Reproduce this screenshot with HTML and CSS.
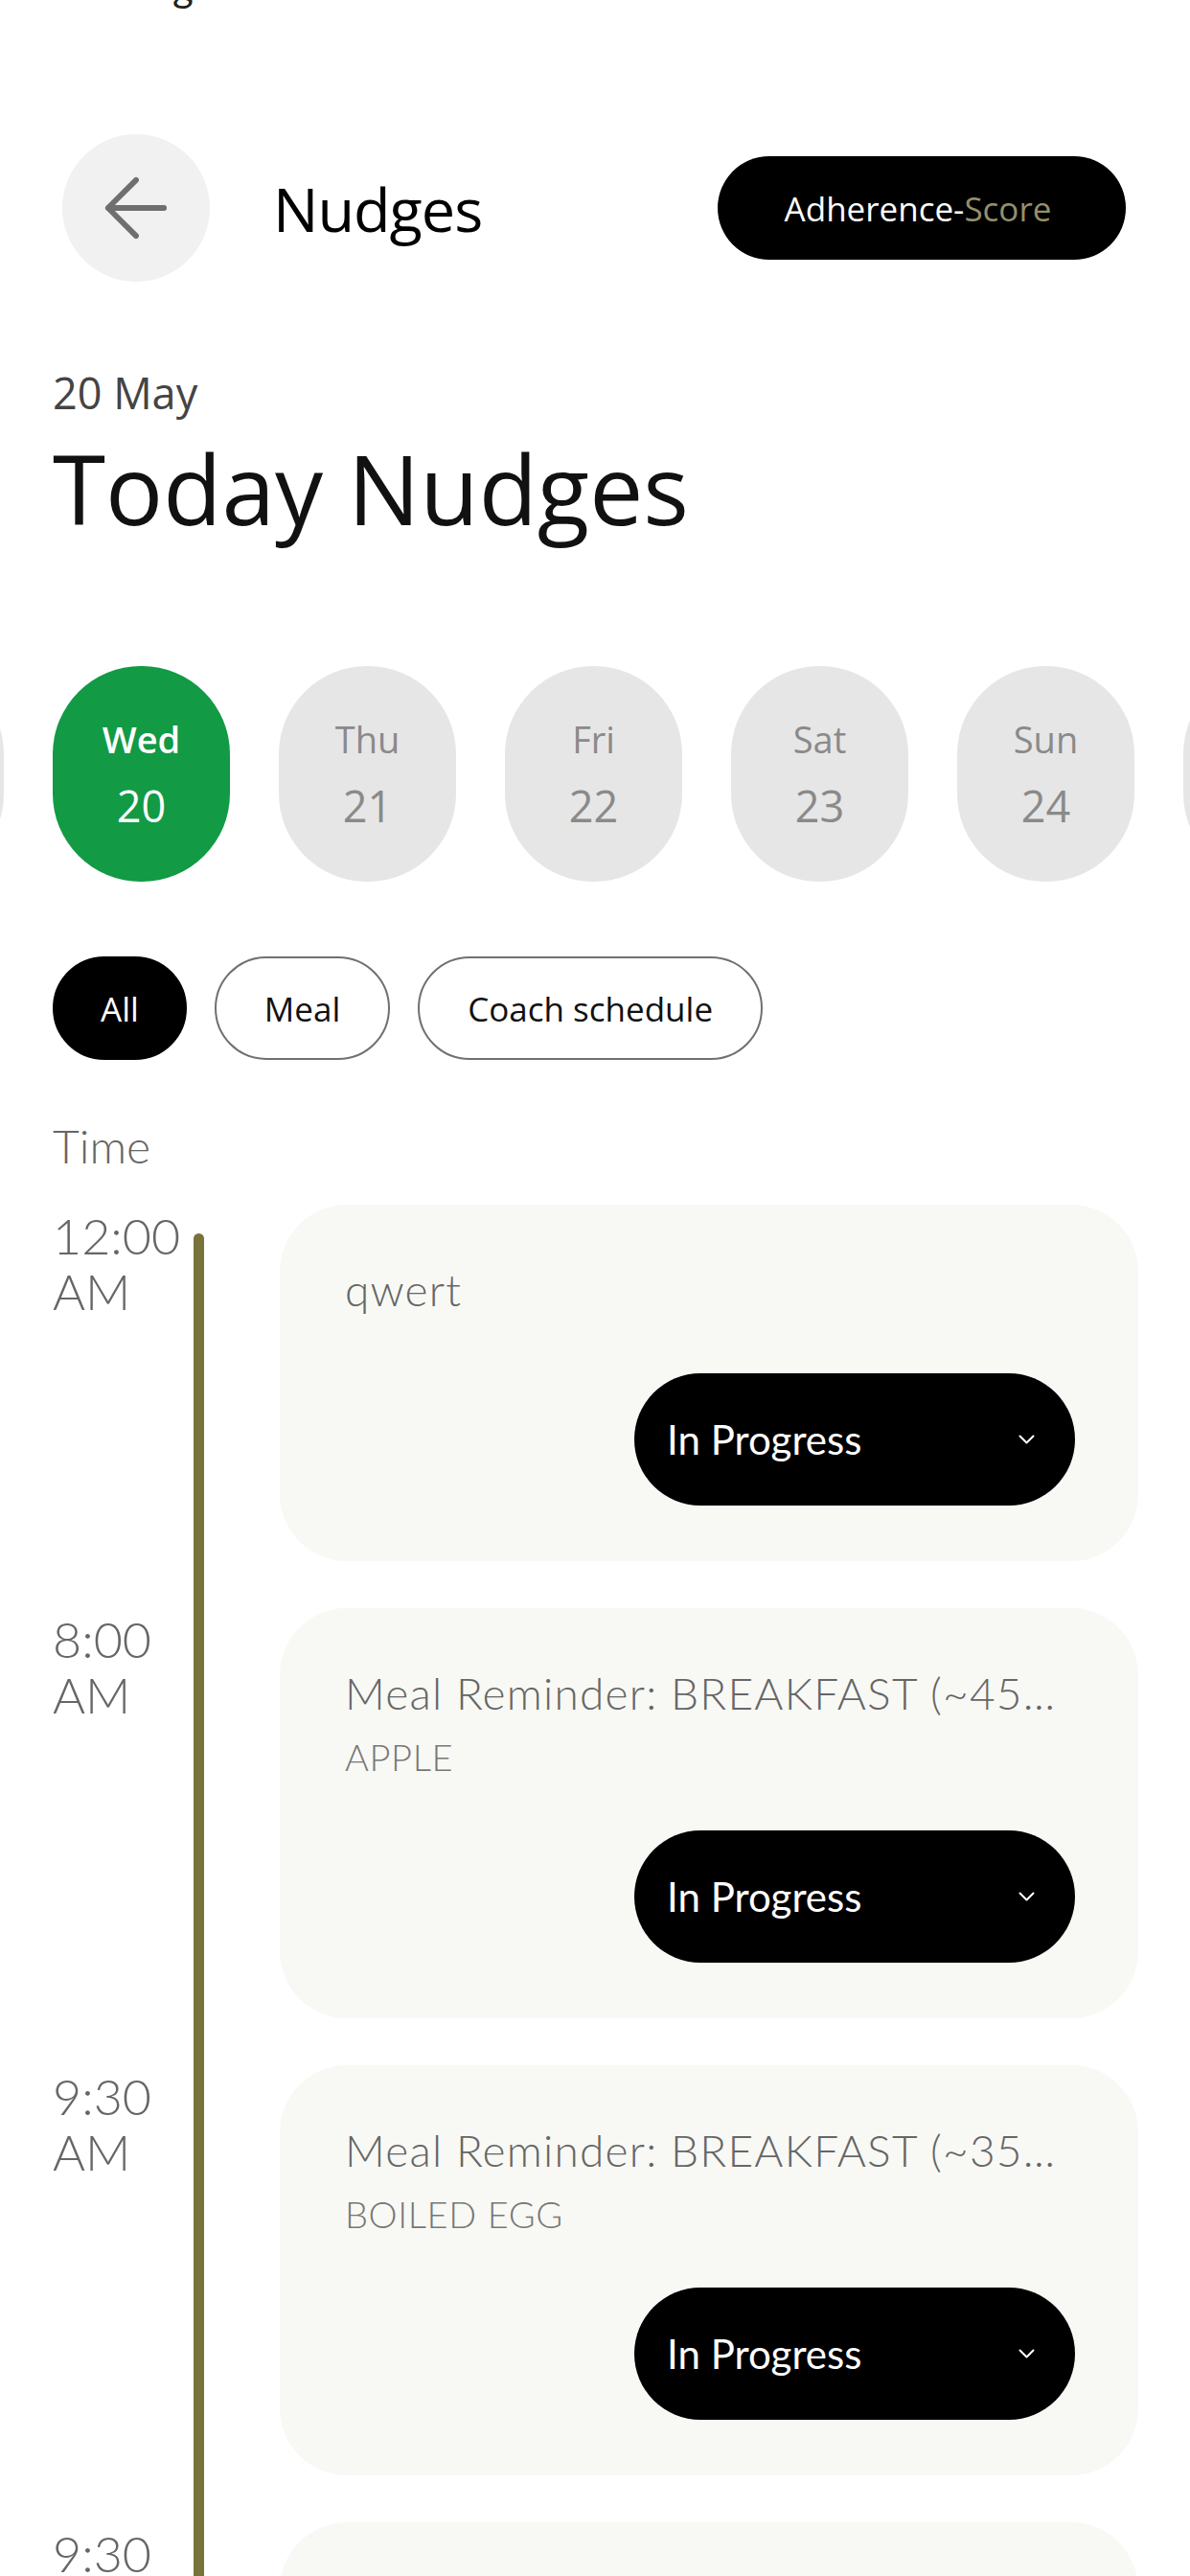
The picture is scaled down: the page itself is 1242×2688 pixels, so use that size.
FILE: index.html
```html
<!DOCTYPE html>
<html lang="en">
<head>
  <meta charset="UTF-8">
  <meta name="viewport" content="width=device-width, initial-scale=1.0">
  <title>Nudges</title>
  <link rel="stylesheet" href="styles.css">
</head>
<body>
  <div class="peek"><span>g</span></div>

  <header>
    <button class="back-btn" aria-label="Back">
      <svg viewBox="0 0 24 24" width="100" height="100"><path d="M19 12H5M12 19l-7-7 7-7" fill="none" stroke="#6f6f6f" stroke-width="1.4" stroke-linecap="round" stroke-linejoin="round"/></svg>
    </button>
    <h1>Nudges</h1>
    <button class="score-btn">Adherence-<span>Score</span></button>
  </header>

  <div class="container">
    <p class="date">20 May</p>
    <h2 class="title">Today Nudges</h2>

    <div class="days-wrap">
      <div class="days">
        <div class="day edge"></div>
        <div class="day active"><span>Wed</span><b>20</b></div>
        <div class="day"><span>Thu</span><b>21</b></div>
        <div class="day"><span>Fri</span><b>22</b></div>
        <div class="day"><span>Sat</span><b>23</b></div>
        <div class="day"><span>Sun</span><b>24</b></div>
        <div class="day edge"></div>
      </div>
    </div>

    <div class="chips">
      <button class="chip active">All</button>
      <button class="chip">Meal</button>
      <button class="chip">Coach schedule</button>
    </div>

    <p class="time-head">Time</p>

    <div class="timeline">
      <div class="row">
        <div class="time">12:00<br>AM</div>
        <div class="rail first"></div>
        <div class="card">
          <p class="card-title">qwert</p>
          <div class="status">In Progress
            <svg width="17" height="10" viewBox="0 0 17 10"><path d="M1.5 1.5l7 7 7-7" fill="none" stroke="#fff" stroke-width="2" stroke-linecap="round" stroke-linejoin="round"/></svg>
          </div>
        </div>
      </div>

      <div class="row">
        <div class="time">8:00<br>AM</div>
        <div class="rail"></div>
        <div class="card">
          <p class="card-title">Meal Reminder: BREAKFAST (~450 kcal)</p>
          <p class="card-sub">APPLE</p>
          <div class="status">In Progress
            <svg width="17" height="10" viewBox="0 0 17 10"><path d="M1.5 1.5l7 7 7-7" fill="none" stroke="#fff" stroke-width="2" stroke-linecap="round" stroke-linejoin="round"/></svg>
          </div>
        </div>
      </div>

      <div class="row">
        <div class="time">9:30<br>AM</div>
        <div class="rail"></div>
        <div class="card">
          <p class="card-title">Meal Reminder: BREAKFAST (~350 kcal)</p>
          <p class="card-sub">BOILED EGG</p>
          <div class="status">In Progress
            <svg width="17" height="10" viewBox="0 0 17 10"><path d="M1.5 1.5l7 7 7-7" fill="none" stroke="#fff" stroke-width="2" stroke-linecap="round" stroke-linejoin="round"/></svg>
          </div>
        </div>
      </div>

      <div class="row">
        <div class="time">9:30<br>AM</div>
        <div class="rail"></div>
        <div class="card">
          <p class="card-title">Meal Reminder: BREAKFAST (~120 kcal)</p>
          <p class="card-sub">GREEN TEA</p>
          <div class="status">In Progress
            <svg width="17" height="10" viewBox="0 0 17 10"><path d="M1.5 1.5l7 7 7-7" fill="none" stroke="#fff" stroke-width="2" stroke-linecap="round" stroke-linejoin="round"/></svg>
          </div>
        </div>
      </div>
    </div>
  </div>
</body>
</html>
```

FILE: styles.css
```css
* { box-sizing: border-box; }
body {
  margin: 0;
  font-family: 'Open Sans', sans-serif;
  background: #fff;
  color: #111;
  overflow-x: hidden;
}
p, h1, h2 { margin: 0; }
button { font-family: inherit; cursor: pointer; }

.peek {
  height: 12px;
  overflow: hidden;
  padding-left: 180px;
}
.peek span {
  display: block;
  font-family: Lato, sans-serif;
  font-size: 42px;
  line-height: 42px;
  margin-top: -35px;
  color: #222;
}

header {
  display: flex;
  align-items: center;
  margin-top: 128px;
  padding: 0 67px 0 65px;
}
.back-btn {
  width: 154px;
  height: 154px;
  border-radius: 50%;
  border: none;
  background: #f1f1f1;
  display: flex;
  align-items: center;
  justify-content: center;
  padding: 0;
}
header h1 {
  margin-left: 66px;
  font-size: 63px;
  font-weight: 500;
  letter-spacing: -1px;
  color: #000;
}
.score-btn {
  margin-left: auto;
  width: 426px;
  height: 108px;
  border: none;
  border-radius: 54px;
  background: #000;
  color: #fff;
  font-size: 35px;
  padding-right: 14px;
}
.score-btn span { color: #958f6a; }

.container {
  padding: 0 54px 0 55px;
}
.date {
  margin-top: 89px;
  font-size: 45px;
  line-height: 54px;
  color: #444;
}
.title {
  margin-top: 14px;
  font-size: 100px;
  line-height: 116px;
  font-weight: 400;
  color: #111;
}

.days-wrap {
  margin: 128px -54px 0 -55px;
  overflow: hidden;
}
.days {
  display: flex;
  gap: 51px;
  margin-left: -181px;
}
.day {
  flex-shrink: 0;
  width: 185px;
  height: 225px;
  border-radius: 92px;
  background: #e6e6e6;
  color: #8a8a8a;
  display: flex;
  flex-direction: column;
  align-items: center;
  justify-content: center;
  gap: 20px;
}
.day span {
  font-size: 38px;
  line-height: 46px;
  font-weight: 500;
}
.day b {
  font-size: 45px;
  line-height: 54px;
  font-weight: 400;
}
.day.active {
  background: #129a45;
  color: #fff;
}
.day.active span { font-weight: 600; }

.chips {
  display: flex;
  gap: 29px;
  margin-top: 78px;
}
.chip {
  height: 108px;
  padding: 0 50px;
  border: 2px solid #707070;
  border-radius: 54px;
  background: #fff;
  color: #111;
  font-size: 35px;
}
.chip.active {
  padding: 0 48px;
  background: #000;
  border-color: #000;
  color: #fff;
}

.time-head {
  margin-top: 61px;
  font-family: Lato, sans-serif;
  font-weight: 300;
  font-size: 48px;
  line-height: 58px;
  color: #666;
}

.timeline {
  margin-top: 32px;
  font-family: Lato, sans-serif;
}
.row {
  display: grid;
  grid-template-columns: 147px 11px minmax(0, 1fr);
}
.time {
  padding-top: 3px;
  font-size: 52px;
  font-weight: 300;
  line-height: 58px;
  color: #666;
}
.rail {
  background: #77733b;
}
.rail.first {
  margin-top: 30px;
  border-radius: 6px 6px 0 0;
}
.card {
  margin: 0 0 49px 79px;
  padding: 61px 66px 58px 68px;
  background: #f8f9f5;
  border-radius: 70px;
}
.card-title {
  padding-right: 12px;
  font-size: 46px;
  font-weight: 300;
  letter-spacing: 1.2px;
  line-height: 56px;
  color: #666;
  white-space: nowrap;
  overflow: hidden;
  text-overflow: ellipsis;
}
.card-sub {
  margin-top: 17px;
  font-size: 38px;
  font-weight: 300;
  letter-spacing: 0.6px;
  line-height: 42px;
  color: #777;
}
.status {
  display: flex;
  align-items: center;
  justify-content: space-between;
  width: 460px;
  height: 138px;
  margin: 59px 0 0 auto;
  padding: 0 42px 0 34px;
  border-radius: 69px;
  background: #000;
  color: #fff;
  font-size: 42px;
}
.card-sub + .status { margin-top: 56px; }
```
